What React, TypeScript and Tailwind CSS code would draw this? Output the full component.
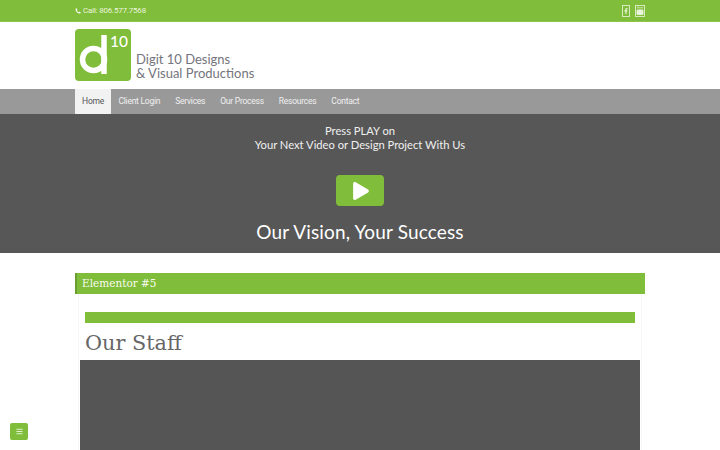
import { Phone } from 'lucide-react'
import { FaFacebookF, FaPlay, FaBars } from 'react-icons/fa'

const navItems = ['Home', 'Client Login', 'Services', 'Our Process', 'Resources', 'Contact']

function Logo() {
  return (
    <svg width="56" height="52" viewBox="0 0 56 52" className="shrink-0">
      <rect width="56" height="52" rx="4" fill="#80bd3a" />
      <circle cx="18.5" cy="30.5" r="11" fill="none" stroke="#fff" strokeWidth="5.5" />
      <path d="M29 6V45" fill="none" stroke="#fff" strokeWidth="5.5" />
      <text x="35" y="18" fill="#fff" fontSize="15.5" fontWeight="500" fontFamily="Lato, sans-serif">10</text>
    </svg>
  )
}

function TubeIcon() {
  return (
    <svg width="8" height="9" viewBox="0 0 8 9">
      <path d="M1.5 0.5h1v2h-1zM3.5 1h1v1.500h-1zM5.500 1h1v1.500h-1z" fill="#e8f4da" />
      <rect x="0.500" y="3.500" width="7" height="5.500" rx="1.500" fill="#e8f4da" />
    </svg>
  )
}

export default function App() {
  return (
    <div className="relative h-[450px] overflow-hidden bg-white font-['Lato',sans-serif]">
      <div className="h-[22px] border-b border-[#8cc44c] bg-[#80bd3a]">
        <div className="mx-[75px] flex h-[21px] items-center justify-between">
          <div className="flex items-center gap-[2px] font-['Roboto',sans-serif] text-[8px] tracking-[-0.2px] text-[#eaf5dc]">
            <Phone size={6} fill="#fff" strokeWidth={0} />
            <span>Call: 806.577.7568</span>
          </div>
          <div className="flex gap-[5px]">
            <div className="flex h-[12px] w-[8px] items-center justify-center border border-[#d8ebc0]">
              <FaFacebookF size={6} color="#e8f4da" />
            </div>
            <div className="flex h-[12px] w-[10px] items-center justify-center border border-[#d8ebc0]">
              <TubeIcon />
            </div>
          </div>
        </div>
      </div>

      <header className="flex h-[67px] items-start pl-[75px] pt-[7px]">
        <Logo />
        <div className="ml-[5px] mt-[23px] text-[13px] leading-[14px] text-[#74747c]">
          <div>Digit 10 Designs</div>
          <div>&amp; Visual Productions</div>
        </div>
      </header>

      <nav className="flex h-[25px] bg-[#999999] pl-[75px] font-['Roboto',sans-serif] text-[8.5px] tracking-[-0.25px]">
        {navItems.map((item, i) => (
          <a
            key={item}
            className={
              i === 0
                ? 'flex w-[36px] items-center justify-center bg-[#f2f2f2] text-[#555555]'
                : 'flex items-center px-[7.5px] text-[#f0f0f0]'
            }
          >
            {item}
          </a>
        ))}
      </nav>

      <section className="flex h-[139px] flex-col items-center bg-[#575757] text-white">
        <div className="mt-[10px] text-center text-[11.2px] leading-[14px] text-[#f0f0f0]">
          <div>Press PLAY on</div>
          <div>Your Next Video or Design Project With Us</div>
        </div>
        <div className="mt-[23px] flex h-[31px] w-[48px] items-center justify-center rounded-[4px] bg-[#80bd3a]">
          <FaPlay size={18} color="#fff" className="ml-[2px]" />
        </div>
        <div className="mt-[13px] text-[19px] leading-[26px] tracking-[0.15px]">Our Vision, Your Success</div>
      </section>

      <main className="mx-[75px] mt-[20px] w-[570px]">
        <div className="flex h-[21px] items-center border-l-2 border-[#6a9e30] bg-[#80bd3a] pl-[5px] font-['DejaVu_Serif',serif] text-[10.5px] text-[#f7fbf0]">
          Elementor #5
        </div>
        <div className="mx-[3px] border-x border-[#f7f7f7]">
          <div className="px-[6px] pt-[18px]">
            <div className="h-[11px] bg-[#80bd3a]" />
            <h1 className="mt-[5px] h-[31px] font-['DejaVu_Serif',serif] text-[20.8px] leading-[31px] text-[#666666]">
              Our Staff
            </h1>
          </div>
          <div className="mx-[1px] mt-[1px] h-[120px] bg-[#555555]" />
        </div>
      </main>

      <button className="fixed bottom-[10px] left-[10px] flex h-[17px] w-[18px] items-center justify-center rounded-[2px] bg-[#80bd3a]">
        <FaBars size={7} color="#e4f2d4" />
      </button>
    </div>
  )
}
